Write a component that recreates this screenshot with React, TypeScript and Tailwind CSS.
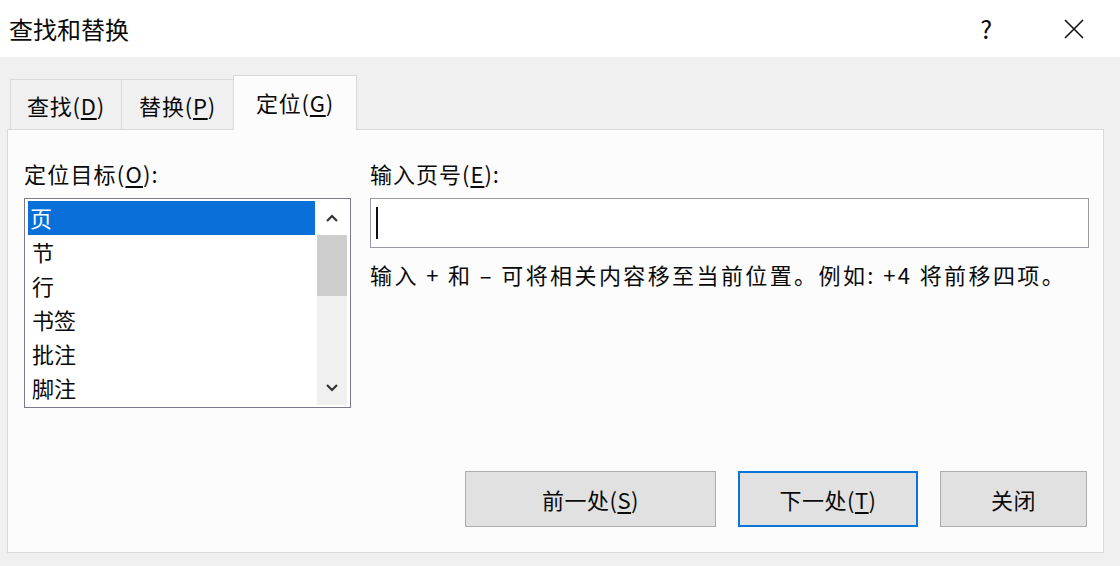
const font = "font-['Noto_Sans_CJK_SC','Noto_Sans',sans-serif]";

function Tab({ label, k, active, w }: { label: string; k: string; active?: boolean; w: string }) {
  return (
    <div
      className={
        active
          ? `relative z-10 -mb-px flex h-[55px] ${w} items-center justify-center border border-b-0 border-[#d9d9d9] bg-[#fcfcfd] pb-[2px] text-[22px] tracking-[0.8px] text-[#0a0a0a]`
          : `flex h-[50px] ${w} items-center justify-center border border-b-0 border-[#d9d9d9] bg-[#f0f0f0] pt-[2px] text-[22px] tracking-[0.8px] text-[#0a0a0a]`
      }
    >
      {label}(<span className="underline underline-offset-[3px]">{k}</span>)
    </div>
  );
}

function Button({ children, w, primary }: { children: React.ReactNode; w: string; primary?: boolean }) {
  return (
    <button
      type="button"
      className={`flex h-[56px] ${w} items-center justify-center bg-[#e1e1e1] text-[22px] tracking-[0.5px] text-[#0a0a0a] ${
        primary ? "border-2 border-[#0a74d8]" : "border border-[#adadad]"
      }`}
    >
      {children}
    </button>
  );
}

export default function App() {
  const items = ["页", "节", "行", "书签", "批注", "脚注"];

  return (
    <div className={`flex h-[566px] w-[1120px] flex-col overflow-hidden bg-[#f0f0f0] ${font}`}>
      {/* title bar */}
      <div className="flex h-[57px] shrink-0 items-center bg-white pl-[9px]">
        <div className="text-[24px] leading-none text-[#0a0a0a]">查找和替换</div>
        <div className="ml-auto flex items-center">
          <span className="mr-[72px] text-[25px] leading-none text-[#0a0a0a]">?</span>
          <svg width="20" height="20" viewBox="0 0 20 20" className="mr-[36px]">
            <path d="M1 1 L19 19 M19 1 L1 19" stroke="#111" strokeWidth="1.6" fill="none" />
          </svg>
        </div>
      </div>

      {/* body */}
      <div className="flex flex-1 flex-col pl-[7px] pr-[16px] pt-[18px] pb-[13px]">
        {/* tabs */}
        <div className="ml-[3px] flex items-end">
          <Tab label="查找" k="D" w="w-[112px]" />
          <Tab label="替换" k="P" w="w-[113px] -ml-px" />
          <Tab label="定位" k="G" w="w-[124px] -ml-px" active />
        </div>

        {/* panel */}
        <div className="flex flex-1 flex-col border border-[#d9d9d9] bg-[#fcfcfd]">
          <div className="flex gap-[19px] pl-[16px] pr-[14px] pt-[30px]">
            {/* left column */}
            <div className="flex w-[327px] flex-col">
              <div className="h-[26px] text-[22px] leading-[26px] tracking-[1.2px] text-[#0a0a0a]">
                定位目标(<span className="underline underline-offset-[3px]">O</span>):
              </div>
              <div className="mt-[12px] flex h-[210px] border border-[#7a7a8c] bg-white">
                <div className="flex flex-1 flex-col pl-[3px] pt-[2px]">
                  {items.map((it, i) => (
                    <div
                      key={it}
                      className={
                        i === 0
                          ? "flex h-[34px] items-center bg-[#0a6fd8] pb-[2px] pl-[2px] text-[22px] text-white"
                          : "flex h-[34px] items-center pb-[2px] pl-[4px] text-[22px] text-[#0a0a0a]"
                      }
                    >
                      {it}
                    </div>
                  ))}
                </div>
                {/* scrollbar */}
                <div className="my-[2px] mr-[3px] ml-[2px] flex w-[30px] flex-col items-center bg-[#f0f0f0]">
                  <div className="flex h-[34px] w-full items-center justify-center bg-white">
                    <svg width="14" height="10" viewBox="0 0 14 10">
                      <path d="M2 8 L7 3 L12 8" stroke="#333" strokeWidth="2.2" fill="none" />
                    </svg>
                  </div>
                  <div className="h-[61px] w-full bg-[#cdcdcd]" />
                  <div className="mt-auto flex h-[34px] w-full items-center justify-center">
                    <svg width="14" height="10" viewBox="0 0 14 10">
                      <path d="M2 2 L7 7 L12 2" stroke="#333" strokeWidth="2.2" fill="none" />
                    </svg>
                  </div>
                </div>
              </div>
            </div>

            {/* right column */}
            <div className="flex flex-1 flex-col">
              <div className="h-[26px] text-[22px] leading-[26px] tracking-[1px] text-[#0a0a0a]">
                输入页号(<span className="underline underline-offset-[3px]">E</span>):
              </div>
              <div className="mt-[12px] flex h-[50px] items-center border border-[#9a9aa6] bg-white pl-[5px]">
                <div className="h-[32px] w-[2px] bg-[#111]" />
              </div>
              <div className="mt-[13px] whitespace-pre text-[22px] leading-[26px] tracking-[2.4px] text-[#0a0a0a]">
                输入 + 和 – 可将相关内容移至当前位置。例如: +4 将前移四项。
              </div>
            </div>
          </div>

          {/* buttons */}
          <div className="mt-auto flex justify-end gap-[22px] pb-[25px] pr-[16px]">
            <Button w="w-[251px]">
              前一处(<span className="underline underline-offset-[3px]">S</span>)
            </Button>
            <Button w="w-[180px]" primary>
              下一处(<span className="underline underline-offset-[3px]">T</span>)
            </Button>
            <Button w="w-[147px]">关闭</Button>
          </div>
        </div>
      </div>
    </div>
  );
}
